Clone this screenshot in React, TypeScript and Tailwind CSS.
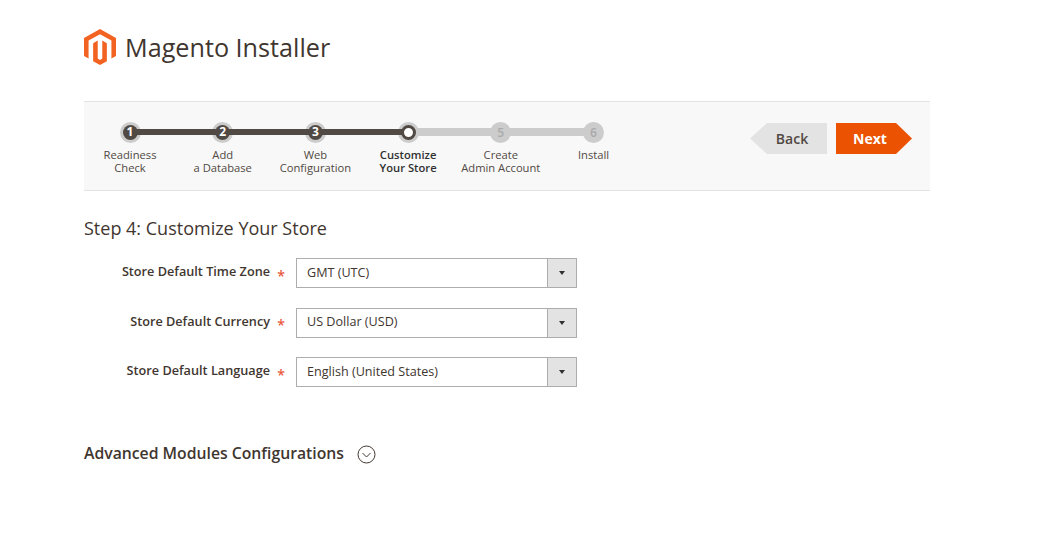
import React from 'react';

const steps = [
  { n: 1, lines: ['Readiness', 'Check'], state: 'done' },
  { n: 2, lines: ['Add', 'a Database'], state: 'done' },
  { n: 3, lines: ['Web', 'Configuration'], state: 'done' },
  { n: 4, lines: ['Customize', 'Your Store'], state: 'active' },
  { n: 5, lines: ['Create', 'Admin Account'], state: 'todo' },
  { n: 6, lines: ['Install'], state: 'todo' },
];

const fields = [
  { label: 'Store Default Time Zone', value: 'GMT (UTC)' },
  { label: 'Store Default Currency', value: 'US Dollar (USD)' },
  { label: 'Store Default Language', value: 'English (United States)' },
];

function Logo() {
  return (
    <svg width="32" height="36" viewBox="1.6 0 20.8 24" preserveAspectRatio="none" className="shrink-0">
      <path
        fill="#f26322"
        d="M12 24l-4.455-2.572v-12l2.97-1.715v12.001l1.485.902 1.485-.902V7.713l2.971 1.715v12L12 24zM22.391 6v12l-2.969 1.714V7.713L12 3.43 4.574 7.713v12L1.609 18V6L12 0l10.391 6z"
      />
    </svg>
  );
}

function Step({ step, last }: { step: (typeof steps)[number]; last: boolean }) {
  const done = step.state === 'done';
  const active = step.state === 'active';
  return (
    <div className="relative w-[92.7px] flex flex-col items-center">
      {!last && (
        <div
          className={
            done
              ? 'absolute z-[1] left-[46px] top-[7px] w-[93px] h-[6px] bg-[#514943]'
              : 'absolute z-[1] left-[46px] top-[6px] w-[93px] h-[8px] bg-[#cccccc]'
          }
        />
      )}
      <div className="relative w-[21px] h-[21px] rounded-full bg-[#cccccc] flex items-center justify-center">
        {done && (
          <div className="relative z-[2] w-[15px] h-[15px] -mt-[1px] rounded-full bg-[#514943] flex items-center justify-center text-white text-[12px] font-bold leading-none">
            {step.n}
          </div>
        )}
        {active && (
          <div className="relative z-[2] w-[15px] h-[15px] -mt-[1px] rounded-full bg-white border-[3px] border-[#514943]" />
        )}
        {step.state === 'todo' && (
          <span className="relative z-[2] text-[#aaaaaa] text-[12px] font-semibold leading-none">{step.n}</span>
        )}
      </div>
      <div
        className={
          active
            ? 'mt-[5px] text-[11.2px] leading-[13px] text-center font-semibold text-[#303030]'
            : 'mt-[5px] text-[11.2px] leading-[13px] text-center text-[#514943]'
        }
      >
        {step.lines.map((l) => (
          <div key={l} className="whitespace-nowrap">{l}</div>
        ))}
      </div>
    </div>
  );
}

export default function App() {
  return (
    <div className="min-h-[549px] bg-white pl-[84px] w-[930px] font-['Open_Sans',sans-serif] text-[#303030]">
      <header className="flex gap-[9px] pt-[29px] h-[101px] items-start">
        <Logo />
        <h1 className="text-[25.2px] leading-[36px] text-[#41362f]">Magento Installer</h1>
      </header>

      <div className="h-[90px] bg-[#f8f8f8] border-y border-[#e3e3e3] flex justify-between pt-[20px] pr-[18px]">
        <div className="flex -ml-[0.3px]">
          {steps.map((s, i) => (
            <Step key={s.n} step={s} last={i === steps.length - 1} />
          ))}
        </div>
        <div className="flex gap-[9px] mt-[1px]">
          <div className="w-[77px] h-[31px] bg-[#e3e3e3] text-[#514943] text-[14px] font-semibold flex items-center justify-center pl-[7px] [clip-path:polygon(17px_0,100%_0,100%_100%,17px_100%,0_50%)]">
            Back
          </div>
          <div className="w-[76px] h-[31px] bg-[#eb5202] text-white text-[14px] font-bold flex items-center justify-center pr-[8px] [clip-path:polygon(0_0,60px_0,100%_50%,60px_100%,0_100%)]">
            Next
          </div>
        </div>
      </div>

      <h2 className="mt-[25px] text-[18px] leading-[24px] text-[#41362f]">Step 4: Customize Your Store</h2>

      <div className="mt-[18px] flex flex-col gap-[19.5px]">
        {fields.map((f) => (
          <div key={f.label} className="flex items-center h-[30px]">
            <div className="w-[186px] text-right text-[12.7px] font-semibold leading-[16px] text-[#41362f] -mt-[4px] whitespace-nowrap">
              {f.label}
            </div>
            <div className="w-[22px] mr-[4px] text-center text-[#eb5a3c] text-[14px] leading-none font-semibold mt-[5px]">*</div>
            <div className="w-[281px] h-[30px] border border-[#adadad] flex items-center bg-white">
              <div className="flex-1 pl-[10px] text-[12.6px] text-[#41362f]">{f.value}</div>
              <div className="w-[29px] h-full bg-[#e3e3e3] border-l border-[#adadad] flex items-center justify-center">
                <div className="w-0 h-0 border-x-[3.5px] border-x-transparent border-t-[4px] border-t-[#303030]" />
              </div>
            </div>
          </div>
        ))}
      </div>

      <div className="mt-[55px] flex items-start gap-[13px]">
        <h3 className="text-[15.75px] font-semibold leading-[22px] text-[#41362f]">Advanced Modules Configurations</h3>
        <svg width="19" height="19" viewBox="0 0 19 19" fill="none" stroke="#41362f" className="mt-[3px]">
          <circle cx="9.5" cy="9.5" r="8.5" />
          <path d="M5.5 8 9.5 12 13.5 8" />
        </svg>
      </div>
    </div>
  );
}
